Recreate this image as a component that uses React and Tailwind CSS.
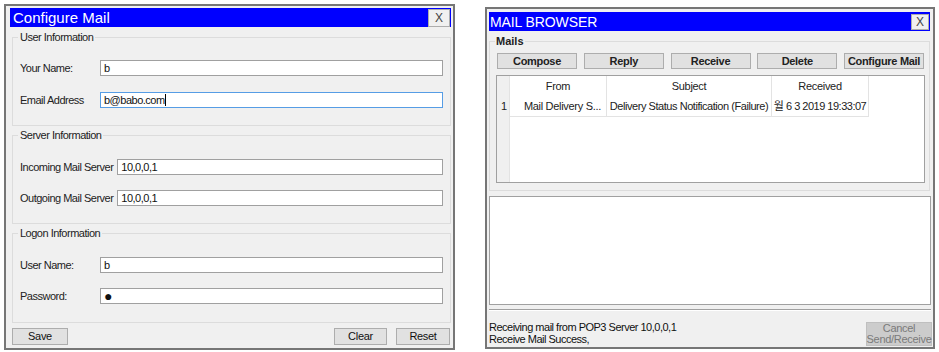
// two win32-style dialogs: configure mail + mail browser

import React from 'react';

const Field = ({ value, focused, caret, dot }) => (
  <div
    className={`flex-1 h-[16px] bg-white border flex items-center pl-[3px] text-[11px] tracking-[-0.5px] text-[#111] ${
      focused ? 'border-[#569de5]' : 'border-[#a0a0a0]'
    }`}
  >
    {dot ? <span className="text-[14px] leading-none">●</span> : value}
    {caret && <span className="inline-block w-px h-[12px] bg-black" />}
  </div>
);

const ConfigureMail = () => {
  return (
    <div className="mt-[4px] ml-[4px] w-[451px] h-[346px] shrink-0 border-2 border-[#767676] bg-[#f0f0f0] flex flex-col">
      {/* title bar */}
      <div className="mt-[2px] ml-[4px] mr-[2px] h-[19px] bg-[#0000ff] flex items-center justify-between pl-[3px] pr-[1px]">
        <span className="text-white text-[15px] leading-none">Configure Mail</span>
        <div className="w-[22px] h-[18px] bg-[#f0f0f0] border border-[#adadad] text-[12px] text-[#444] flex items-center justify-center">X</div>
      </div>

      <fieldset className="mt-[3px] ml-[6px] mr-[2px] border border-[#dcdcdc] pl-[7px] pr-[7px] pt-[16px] pb-[17px] flex flex-col gap-[16px] text-[11px] tracking-[-0.5px] text-[#222]">
        <legend className="px-[2px] ml-[-2px] leading-[14px]">User Information</legend>
        <div className="flex items-center h-[16px]">
          <span className="w-[80px] shrink-0">Your Name:</span>
          <Field value="b" />
        </div>
        <div className="flex items-center h-[16px]">
          <span className="w-[80px] shrink-0">Email Address</span>
          <Field value="b@babo.com" focused caret />
        </div>
      </fieldset>

      <fieldset className="mt-[2px] ml-[6px] mr-[2px] border border-[#dcdcdc] pl-[7px] pr-[7px] pt-[17px] pb-[17px] flex flex-col gap-[15px] text-[11px] tracking-[-0.5px] text-[#222]">
        <legend className="px-[2px] ml-[-2px] leading-[14px]">Server Information</legend>
        <div className="flex items-center gap-[4px] h-[16px]">
          <span className="shrink-0">Incoming Mail Server</span>
          <Field value="10,0,0,1" />
        </div>
        <div className="flex items-center gap-[4px] h-[16px]">
          <span className="shrink-0">Outgoing Mail Server</span>
          <Field value="10,0,0,1" />
        </div>
      </fieldset>

      <fieldset className="mt-[2px] ml-[6px] mr-[2px] border border-[#dcdcdc] pl-[7px] pr-[7px] pt-[17px] pb-[18px] flex flex-col gap-[15px] text-[11px] tracking-[-0.5px] text-[#222]">
        <legend className="px-[2px] ml-[-2px] leading-[14px]">Logon Information</legend>
        <div className="flex items-center h-[16px]">
          <span className="w-[80px] shrink-0">User Name:</span>
          <Field value="b" />
        </div>
        <div className="flex items-center h-[16px]">
          <span className="w-[80px] shrink-0">Password:</span>
          <Field dot />
        </div>
      </fieldset>

      <div className="mt-[5px] ml-[6px] mr-[3px] flex items-center text-[11px] tracking-[-0.3px] text-[#111]">
        <button className="w-[56px] h-[17px] bg-[#e1e1e1] border border-[#adadad] leading-none">Save</button>
        <div className="flex-1" />
        <button className="w-[53px] h-[17px] bg-[#e1e1e1] border border-[#adadad] leading-none">Clear</button>
        <button className="ml-[9px] w-[54px] h-[17px] bg-[#e1e1e1] border border-[#adadad] leading-none">Reset</button>
      </div>
    </div>
  );
};

const MailBrowser = () => {
  const tools = ['Compose', 'Reply', 'Receive', 'Delete', 'Configure Mail'];
  return (
    <div className="mt-[7px] ml-[30px] w-[450px] h-[342px] shrink-0 border-2 border-[#767676] bg-[#f0f0f0] flex flex-col">
      {/* title bar */}
      <div className="mt-[3px] ml-[2px] mr-[3px] h-[19px] bg-[#0000ff] flex items-center justify-between pl-[1px] pr-[1px]">
        <span className="text-white text-[14px] tracking-[-0.1px] leading-none">MAIL BROWSER</span>
        <div className="w-[18px] h-[16px] bg-[#f0f0f0] border border-[#adadad] text-[12px] text-[#444] flex items-center justify-center">X</div>
      </div>

      <fieldset className="mt-[3px] ml-[2px] mr-[3px] border border-[#dcdcdc] pl-[6px] pr-[4px] pt-[5px] pb-[7px]">
        <legend className="px-[1px] ml-[-1px] text-[11px] leading-[14px] font-bold text-[#222]">Mails</legend>
        <div className="mx-[1px] flex justify-between">
          {tools.map((t) => (
            <button key={t} className="w-[80px] h-[16px] bg-[#e1e1e1] border border-[#adadad] text-[11px] tracking-[-0.3px] font-bold text-[#222] leading-none whitespace-nowrap">
              {t}
            </button>
          ))}
        </div>

        {/* mail list */}
        <div className="mt-[6px] h-[108px] border border-[#a0a0a0] bg-white flex text-[11px] tracking-[-0.3px] text-[#222] whitespace-nowrap">
          <div className="w-[13px] shrink-0 bg-[#f0f0f0] border-r border-[#e3e3e3] flex flex-col">
            <div className="h-[20px]" />
            <div className="h-[20px] flex items-center pl-[4px]">1</div>
          </div>
          <div className="flex flex-col">
            <div className="flex h-[20px]">
              <div className="w-[97px] border-r border-[#e3e3e3] flex items-center justify-center">From</div>
              <div className="w-[165px] border-r border-[#e3e3e3] flex items-center justify-center">Subject</div>
              <div className="w-[97px] border-r border-[#e3e3e3] flex items-center justify-center">Received</div>
            </div>
            <div className="flex h-[21px] border-b border-[#e3e3e3]">
              <div className="w-[97px] border-r border-[#e3e3e3] flex items-center justify-end pr-[5px]">Mail Delivery S...</div>
              <div className="w-[165px] border-r border-[#e3e3e3] flex items-center justify-center tracking-[-0.45px]">Delivery Status Notification (Failure)</div>
              <div className="w-[97px] border-r border-[#e3e3e3] flex items-center justify-center tracking-[-0.5px] font-[family-name:'Liberation_Sans','Noto_Sans_CJK_KR',sans-serif]">월 6 3 2019 19:33:07</div>
            </div>
          </div>
        </div>
      </fieldset>

      {/* message body */}
      <div className="mt-[5px] ml-[2px] mr-[2px] h-[109px] bg-white border border-[#a0a0a0]" />

      <div className="mt-[4px] mx-[2px] h-[2px] border-t border-[#a0a0a0] border-b border-b-white" />

      <div className="mt-[10px] ml-[2px] mr-[1px] flex items-start justify-between">
        <div className="text-[11px] tracking-[-0.5px] leading-[12px] text-[#111]">
          <div>Receiving mail from POP3 Server 10,0,0,1</div>
          <div>Receive Mail Success,</div>
        </div>
        <button className="mt-[1px] w-[66px] h-[24px] bg-[#cccccc] border border-[#bfbfbf] text-[11px] tracking-[-0.3px] leading-[11px] text-[#7a7a7a] flex flex-col items-center justify-center whitespace-nowrap">
          <span>Cancel</span>
          <span>Send/Receive</span>
        </button>
      </div>
    </div>
  );
};

const App = () => {
  return (
    <div className="w-[939px] h-[352px] bg-white flex items-start overflow-hidden font-[family-name:'Liberation_Sans',Arial,sans-serif]">
      <ConfigureMail />
      <MailBrowser />
    </div>
  );
};

export default App;
